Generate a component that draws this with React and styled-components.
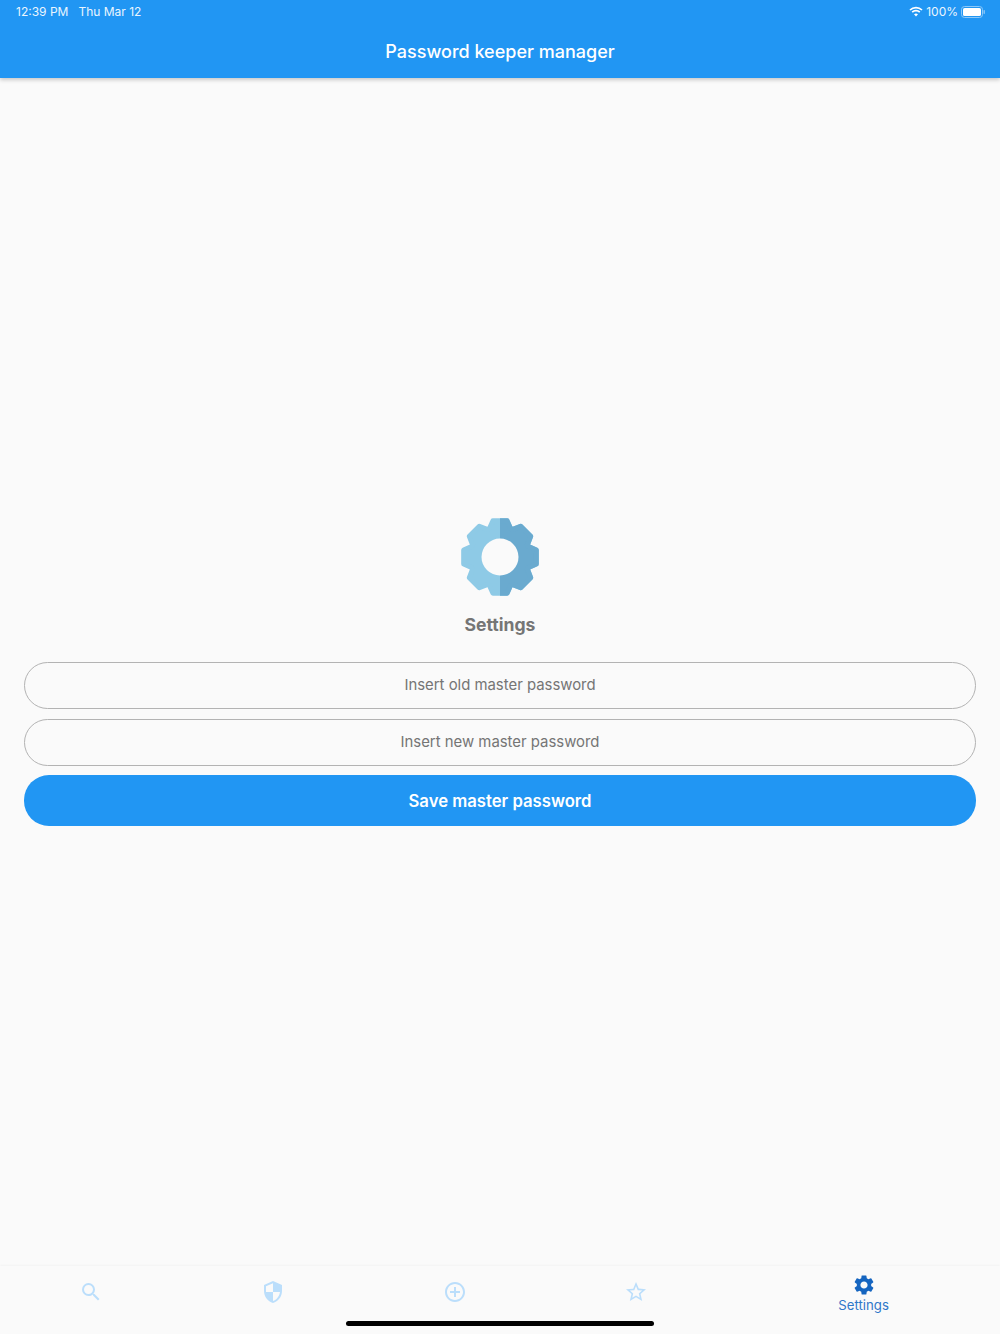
import React from 'react'
import styled, { createGlobalStyle } from 'styled-components'
import { MdSearch, MdSecurity, MdAddCircleOutline, MdStarBorder, MdSettings } from 'react-icons/md'

const GlobalStyle = createGlobalStyle`
  html, body {
    margin: 0;
    padding: 0;
    background: #fafafa;
    font-family: Inter, Roboto, "Liberation Sans", sans-serif;
  }
  * {
    box-sizing: border-box;
  }
`

const Page = styled.div`
  position: relative;
  width: 1000px;
  height: 1334px;
  display: flex;
  flex-direction: column;
  overflow: hidden;
  background: #fafafa;
`

const Header = styled.header`
  height: 78px;
  flex: none;
  background: #2196f3;
  color: #fff;
  box-shadow: 0 2px 4px rgba(0, 0, 0, 0.2);
  z-index: 1;
`

const StatusBar = styled.div`
  height: 23px;
  padding: 0 15px 0 16px;
  display: flex;
  align-items: center;
  justify-content: space-between;
  font-size: 12px;
  color: #eaf5fe;
`

const StatusGroup = styled.div`
  display: flex;
  align-items: center;
  gap: ${p => p.$gap}px;
`

const Title = styled.h1`
  margin: 0;
  height: 55px;
  padding-top: 2px;
  display: flex;
  align-items: center;
  justify-content: center;
  font-size: 18px;
  font-weight: 500;
`

const Main = styled.main`
  flex: 1;
  padding: 0 24px;
  display: flex;
  flex-direction: column;
  align-items: stretch;
  justify-content: center;
`

const Heading = styled.h2`
  margin: 15px 0 24px;
  text-align: center;
  font-size: 17.6px;
  line-height: 26px;
  font-weight: 700;
  color: #757575;
`

const GearWrap = styled.div`
  display: flex;
  justify-content: center;
  height: 79px;
`

const Field = styled.div`
  height: 47px;
  margin-bottom: ${p => p.$gap}px;
  border: 1px solid #b3b3b3;
  border-radius: 24px;
  display: flex;
  align-items: center;
  justify-content: center;
  padding-bottom: 1px;
  font-size: 14.9px;
  color: #757575;
`

const SaveButton = styled.button`
  height: 51px;
  border: 0;
  border-radius: 25px;
  background: #2196f3;
  color: #fff;
  font-family: inherit;
  font-size: 16.7px;
  font-weight: 600;
`

const Nav = styled.nav`
  height: 68px;
  flex: none;
  display: flex;
  background: #fafafa;
  box-shadow: 0 -1px 2px rgba(0, 0, 0, 0.03);
`

const Tab = styled.div`
  flex: ${p => (p.$active ? 1.5 : 1)};
  height: 52px;
  display: flex;
  flex-direction: column;
  align-items: center;
  justify-content: center;
  color: ${p => (p.$active ? '#1565c0' : '#bbdefb')};
  font-size: 24px;
  margin-top: ${p => (p.$active ? 1 : 0)}px;
`

const TabLabel = styled.span`
  font-size: 13.2px;
  line-height: 16px;
  color: #2f77c9;
`

const HomeIndicator = styled.div`
  position: absolute;
  left: 346px;
  bottom: 8px;
  width: 308px;
  height: 5px;
  border-radius: 3px;
  background: #000;
`

const gearPoints = () => {
  const pts = []
  for (let i = 0; i < 8; i++) {
    const a = i * 45
    ;[[30, -21], [37, -11], [37, 11], [30, 21]].forEach(([r, off]) => {
      const t = ((a + off - 90) * Math.PI) / 180
      pts.push(`${(39 + r * Math.cos(t)).toFixed(2)},${(39 + r * Math.sin(t)).toFixed(2)}`)
    })
  }
  return pts.join(' ')
}

const Gear = () => {
  const pts = gearPoints()
  return (
    <svg width="78" height="78" viewBox="0 0 78 78">
      <defs>
        <clipPath id="right-half">
          <rect x="39" y="0" width="39" height="78" />
        </clipPath>
      </defs>
      <polygon points={pts} fill="#8ecae6" stroke="#8ecae6" strokeWidth="5" strokeLinejoin="round" />
      <polygon points={pts} fill="#6aaacf" stroke="#6aaacf" strokeWidth="5" strokeLinejoin="round" clipPath="url(#right-half)" />
      <circle cx="39" cy="39" r="18.5" fill="#fafafa" />
    </svg>
  )
}

const Wifi = () => (
  <svg width="14" height="11" viewBox="0 0 14 11" fill="none" stroke="#fff" strokeWidth="1.7">
    <path d="M1 4a8.6 8.6 0 0 1 12 0" />
    <path d="M3.2 6.2a5.4 5.4 0 0 1 7.6 0" />
    <path d="M7 10.6L5 8.3a3 3 0 0 1 4 0z" fill="#fff" stroke="none" />
  </svg>
)

const Battery = () => (
  <svg width="24" height="12" viewBox="0 0 24 12">
    <rect x="0.5" y="0.5" width="21" height="11" rx="3" fill="none" stroke="#8cc8f8" />
    <rect x="2" y="2" width="18" height="8" rx="1.6" fill="#fff" />
    <rect x="22.5" y="4" width="1.4" height="4" rx="0.7" fill="#8cc8f8" />
  </svg>
)

export default function App() {
  return (
    <Page>
      <GlobalStyle />
      <Header>
        <StatusBar>
          <StatusGroup $gap={10}>
            <span>12:39 PM</span>
            <span>Thu Mar 12</span>
          </StatusGroup>
          <StatusGroup $gap={3}>
            <Wifi />
            <span>100%</span>
            <Battery />
          </StatusGroup>
        </StatusBar>
        <Title>Password keeper manager</Title>
      </Header>
      <Main>
        <GearWrap>
          <Gear />
        </GearWrap>
        <Heading>Settings</Heading>
        <Field $gap={10}>Insert old master password</Field>
        <Field $gap={9}>Insert new master password</Field>
        <SaveButton>Save master password</SaveButton>
      </Main>
      <Nav>
        <Tab><MdSearch /></Tab>
        <Tab><MdSecurity /></Tab>
        <Tab><MdAddCircleOutline /></Tab>
        <Tab><MdStarBorder /></Tab>
        <Tab $active>
          <MdSettings />
          <TabLabel>Settings</TabLabel>
        </Tab>
      </Nav>
      <HomeIndicator />
    </Page>
  )
}
